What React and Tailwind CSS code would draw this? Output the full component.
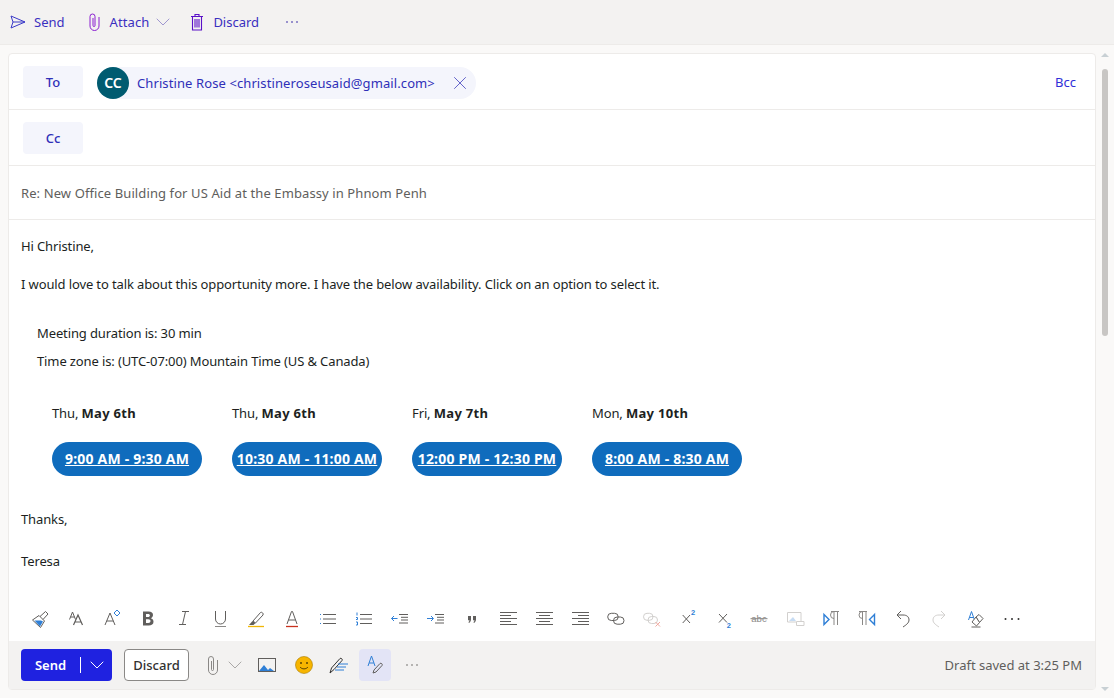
import React from 'react'
import { ChevronDown, X } from 'lucide-react'

const Svg = ({ children }) => (
  <svg width="20" height="20" viewBox="0 0 20 20" fill="none" stroke="#605e5c" strokeWidth="1">{children}</svg>
)

const BLUE = '#2f7fd6'
const DISABLED = '#d2d0ce'

const formatIcons = [
  <Svg key="brush"><path d="M2.5 11L9 6.500l5.500 5.500-4 6.500z" fill="#fff" /><path d="M4.500 11.500h6.500l2 1-3 5z" fill={BLUE} stroke="none" /><path d="M10 7.500L15.500 2.500 18 5l-5 5.500" /></Svg>,
  <Svg key="size"><path d="M3.500 10.500L6.500 3l3 7.500M4.500 8h4" /><path d="M7.500 16L12 6l4.500 10M9 13h6" strokeWidth="1.200" /></Svg>,
  <Svg key="grow"><path d="M3 16L8 4l5 12M4.700 12h6.600" /><path d="M15 1l3 3-3 3-3-3z" stroke={BLUE} /></Svg>,
  <Svg key="bold"><path fillRule="evenodd" d="M5 2.500h5.500c3 0 4.500 1.500 4.500 3.500 0 1.500-1 2.700-2.200 3.200 1.700.4 2.700 1.800 2.700 3.500 0 2.500-2 3.800-4.800 3.800H5zM8 5v3h2c1.200 0 1.900-.6 1.900-1.500 0-1-.7-1.500-1.900-1.500zM8 10.200V14h2.300c1.400 0 2.200-.7 2.200-1.900s-.8-1.900-2.200-1.900z" fill="#605e5c" stroke="none" /></Svg>,
  <Svg key="italic"><path d="M8 2.500h7M5 15.500h7M11.500 2.500L8.500 15.500" /></Svg>,
  <Svg key="underline"><path d="M5.500 2v8a5 5 0 0 0 10 0V2" /><path d="M5 17.500h11" stroke="#8a8886" /></Svg>,
  <Svg key="highlight"><path d="M7 12L14.500 3.500c1-1 3.500 1 2.500 2.500L9.500 14z" /><path d="M3 16l3.500-4 3 2-2 2z" fill="#605e5c" stroke="none" /><path d="M2 17.500h16" stroke="#f2b705" strokeWidth="1.300" /></Svg>,
  <Svg key="color"><path d="M5 15L9.500 2.500h1L15 15M6.500 11h7" /><path d="M4 17.500h12" stroke="#c8321e" strokeWidth="1.300" /></Svg>,
  <Svg key="bullets"><path d="M5 5.500h13M5 10h13M5 14.500h13" /><path d="M2 5.500h1M2 10h1M2 14.500h1" stroke={BLUE} /></Svg>,
  <Svg key="numbers"><path d="M6 5.500h12M6 10h12M6 14.500h12" /><path d="M3 3.500v3M2 8.500h1.500v2H2M2 13h1.500v3H2" stroke={BLUE} /></Svg>,
  <Svg key="outdent"><path d="M9 5.500h9M11 8.300h7M11 11h7M9 14h9" /><path d="M7.500 9.500H1.500M4 7L1.500 9.500 4 12" stroke={BLUE} /></Svg>,
  <Svg key="indent"><path d="M9 5.500h9M11 8.300h7M11 11h7M9 14h9" /><path d="M1 9.500h6M5 7l2.500 2.500L5 12" stroke={BLUE} /></Svg>,
  <Svg key="quote"><path d="M6 7h3v3.500c0 1.500-.8 2.800-1.900 3.500l-.7-.8c.6-.5.9-1 1-2H6zM11 7h3v3.500c0 1.500-.8 2.800-1.900 3.500l-.7-.8c.6-.5.9-1 1-2H11z" fill="#605e5c" stroke="none" /></Svg>,
  <Svg key="left"><path d="M2 3.500h17M2 6.500h11M2 9.500h17M2 12.500h11M2 15.500h17" /></Svg>,
  <Svg key="center"><path d="M2 3.500h17M5 6.500h11M2 9.500h17M5 12.500h11M2 15.500h17" /></Svg>,
  <Svg key="right"><path d="M2 3.500h17M8 6.500h11M2 9.500h17M8 12.500h11M2 15.500h17" /></Svg>,
  <Svg key="link"><rect x="1.700" y="4.300" width="10.500" height="7.200" rx="3.600" /><rect x="7.500" y="8" width="10.500" height="7.200" rx="3.600" /></Svg>,
  <Svg key="unlink"><g stroke={DISABLED}><rect x="1.500" y="4.300" width="9.500" height="7" rx="3.500" /><rect x="6" y="7.500" width="9.500" height="7" rx="3.500" /></g><path d="M13.500 13l4.500 4.500M18 13l-4.500 4.500" stroke="#f0a9a0" /></Svg>,
  <Svg key="sup"><path d="M4.700 6l7.300 8M12 6l-7.300 8" /><text x="13" y="6" fontSize="7.500" fontWeight="700" fill={BLUE} stroke="none" fontFamily="Liberation Sans">2</text></Svg>,
  <Svg key="sub"><path d="M5 5l8 8.500M13 5l-8 8.500" /><text x="12.800" y="19" fontSize="7.500" fontWeight="700" fill={BLUE} stroke="none" fontFamily="Liberation Sans">2</text></Svg>,
  <Svg key="strike"><text x="9" y="12.500" textAnchor="middle" fontSize="9.500" fill="#8a8886" stroke="none" fontFamily="Liberation Sans">abc</text><path d="M0.500 9.700h17" stroke="#8a8886" /></Svg>,
  <Svg key="image"><g stroke={DISABLED}><path d="M10 13H1.500V3.500H15V12" /><path d="M10.500 12.500H18v4h-7.500z" /></g><path d="M3 12l4-4 3 4z" fill="#c7dcf3" stroke="none" /></Svg>,
  <Svg key="ltr"><path d="M9 2.500h8M12 2.500V16M15.500 2.500V16M12 2.500a3.500 3.500 0 0 0 0 7" stroke="#8a8886" /><path d="M2 5.500L7 10.500l-5 5z" stroke={BLUE} strokeWidth="1.400" /></Svg>,
  <Svg key="rtl"><path d="M1 2.500h8M4.500 2.500V16M8 2.500V16M4.500 2.500a3.500 3.500 0 0 0 0 7" stroke="#8a8886" /><path d="M16.500 5.500L11.500 10.500l5 5z" stroke={BLUE} strokeWidth="1.400" /></Svg>,
  <Svg key="undo"><path d="M7 2L3 6l4 4M3 6h6c4 0 6 2 6 5 0 3-3 5-6 7" /></Svg>,
  <Svg key="redo"><path d="M11 2l4 4-4 4M15 6H9C5 6 3 8 3 11c0 3 3 5 6 7" stroke={DISABLED} /></Svg>,
  <Svg key="clear"><path d="M2.500 11L5.500 2.500 8.500 11M3.500 8.500h4" stroke={BLUE} /><path d="M10 8l3-2.500 4 4-3.500 4z" fill="#fff" /><path d="M10 8l3.500 5.500-3 3.500L6 13z" fill="#fff" /><path d="M5.500 18h9" /></Svg>,
  <Svg key="more"><circle cx="3.500" cy="10" r="1" fill="#323130" stroke="none" /><circle cx="10" cy="10" r="1" fill="#323130" stroke="none" /><circle cx="16.500" cy="10" r="1" fill="#323130" stroke="none" /></Svg>,
]

const slots = [
  { day: 'Thu, ', date: 'May 6th', time: '9:00 AM - 9:30 AM' },
  { day: 'Thu, ', date: 'May 6th', time: '10:30 AM - 11:00 AM' },
  { day: 'Fri, ', date: 'May 7th', time: '12:00 PM - 12:30 PM' },
  { day: 'Mon, ', date: 'May 10th', time: '8:00 AM - 8:30 AM' },
]

const Header = () => (
  <div className="h-[45px] shrink-0 bg-[#f3f2f1] border-b border-[#edebe9] flex items-center pl-[10px] text-[13px] text-[#3a2fc0]">
    <svg width="16" height="16" viewBox="0 0 16 16" fill="none" stroke="#3a3ac8" strokeWidth="1"><path d="M1 2l14 6-14 6 2-6zM3 8h12" /></svg>
    <span className="ml-2">Send</span>
    <svg className="ml-[22px]" width="14" height="18" viewBox="0 0 14 18" fill="none" stroke="#8a1fd0" strokeWidth="1"><path d="M12 4v9a4.500 4.500 0 0 1-9 0V3.500a2.500 2.500 0 0 1 5 0v9a1 1 0 0 1-2 0V5" /></svg>
    <span className="ml-[9px] tracking-[0.1px]">Attach</span>
    <ChevronDown className="ml-[2px]" size={24} strokeWidth={0.7} color="#7a70c0" />
    <svg className="ml-[14px]" width="16" height="18" viewBox="0 0 16 18" fill="none" stroke="#5a10c8" strokeWidth="1.100"><path d="M2 3.500h12M3.500 3.500v13.500h9V3.500M6 3.500V1.500h4v2M6 6v8.500M8 6v8.500M10 6v8.500" /></svg>
    <span className="ml-[8px]">Discard</span>
    <span className="ml-[27px] w-3 flex items-center justify-between">
      <i className="w-[2px] h-[2px] rounded-full bg-[#7a70c0]" />
      <i className="w-[2px] h-[2px] rounded-full bg-[#7a70c0]" />
      <i className="w-[2px] h-[2px] rounded-full bg-[#7a70c0]" />
    </span>
  </div>
)

const RecipientLabel = ({ children }) => (
  <div className="w-[60px] h-8 rounded-sm bg-[#f4f5fc] flex items-center justify-center font-medium text-[#2f2fb8]">{children}</div>
)

const Footer = () => (
  <div className="h-[48px] shrink-0 bg-[#f3f2f1] flex items-center pl-3 pr-[13px]">
    <button className="w-[91px] h-8 rounded-sm bg-[#1f22e0] text-white font-semibold flex items-center">
      <span className="w-[59px] text-center">Send</span>
      <span className="w-px h-4 bg-white" />
      <span className="flex-1 flex justify-center"><ChevronDown size={24} strokeWidth={1} /></span>
    </button>
    <button className="ml-3 w-[65px] h-8 rounded-sm border border-[#8a8886] bg-white font-medium text-[#323130]">Discard</button>
    <svg className="ml-4" width="16" height="20" viewBox="0 0 16 20" fill="none" stroke="#8a8886" strokeWidth="1"><path d="M12.500 5v10a4.500 4.500 0 0 1-9 0V4a2.500 2.500 0 0 1 5 0v10.500a1 1 0 0 1-2 0V6" /></svg>
    <ChevronDown className="ml-[2px]" size={24} strokeWidth={0.7} color="#8a8886" />
    <svg className="ml-[11px]" width="18" height="14" viewBox="0 0 18 14" fill="none" stroke="#605e5c"><rect x="0.500" y="0.500" width="17" height="13" /><path d="M1 13l5-6 4 5 2-2 4 3z" fill={BLUE} stroke="none" /></svg>
    <svg className="ml-[18px]" width="20" height="20" viewBox="0 0 20 20"><circle cx="10" cy="10" r="8.500" fill="#f7b500" stroke="#a87b00" strokeWidth="0.6" /><circle cx="7" cy="8" r="1" fill="#5c4400" /><circle cx="13" cy="8" r="1" fill="#5c4400" /><path d="M6 12c2 2.500 6 2.500 8 0" fill="none" stroke="#5c4400" /></svg>
    <svg className="ml-[15px]" width="20" height="20" viewBox="0 0 20 20" fill="none" stroke="#323130"><path d="M1 18l1.500-5L11 3.500c1-1 3 1 2 2l-8 9z" /><path d="M9 9h10M8 12h9M6 15h9" stroke={BLUE} /></svg>
    <div className="ml-[10px] w-8 h-8 rounded-sm bg-[#e3e4f6] flex items-center justify-center">
      <svg width="20" height="20" viewBox="0 0 20 20" fill="none"><path d="M3 11L6.500 1 10 11M4.200 8h4.600" stroke={BLUE} /><path d="M8 18l1-3 6-6.500c1-1 3 .8 2 2L11 17z" stroke="#605e5c" /></svg>
    </div>
    <span className="ml-[15px] w-3 flex items-center justify-between">
      <i className="w-[2px] h-[2px] rounded-full bg-[#a19f9d]" />
      <i className="w-[2px] h-[2px] rounded-full bg-[#a19f9d]" />
      <i className="w-[2px] h-[2px] rounded-full bg-[#a19f9d]" />
    </span>
    <span className="ml-auto text-[#605e5c]">Draft saved at 3:25 PM</span>
  </div>
)

const App = () => {
  return (
    <div className="h-[698px] w-[1114px] overflow-hidden flex flex-col bg-[#faf9f8] text-[13px] leading-5 text-[#201f1e] font-['Noto_Sans',sans-serif]">
      <Header />
      <div className="flex-1 flex min-h-0">
        <div className="ml-2 mt-2 mb-2 w-[1088px] bg-white border border-[#edebe9] rounded-sm flex flex-col">
          <div className="h-[56px] shrink-0 border-b border-[#edebe9] flex items-center pl-[14px] pr-[19px]">
            <RecipientLabel>To</RecipientLabel>
            <div className="ml-[14px] mt-[2px] h-8 rounded-full bg-[#f4f5fc] flex items-center text-[#2f2fb8]">
              <div className="w-8 h-8 rounded-full bg-[#005b70] text-white font-semibold text-sm flex items-center justify-center">CC</div>
              <span className="ml-2 tracking-[0.1px]">Christine Rose &lt;christineroseusaid@gmail.com&gt;</span>
              <X className="ml-[14px] mr-[5px]" size={22} strokeWidth={0.8} color="#2f2fb8" />
            </div>
            <span className="ml-auto text-[#2f2fd8]">Bcc</span>
          </div>
          <div className="h-[56px] shrink-0 border-b border-[#edebe9] flex items-center pl-[14px]">
            <RecipientLabel>Cc</RecipientLabel>
          </div>
          <div className="h-[54px] shrink-0 border-b border-[#edebe9] flex items-center pl-3 text-[#605e5c] tracking-[0.1px]">
            Re: New Office Building for US Aid at the Embassy in Phnom Penh
          </div>
          <div className="flex-1 pl-3 pt-4 tracking-[-0.12px]">
            <p>Hi Christine,</p>
            <p className="mt-[18px]">I would love to talk about this opportunity more. I have the below availability. Click on an option to select it.</p>
            <div className="pl-4">
              <p className="mt-[29px]">Meeting duration is: 30 min</p>
              <p className="mt-2">Time zone is: (UTC-07:00) Mountain Time (US &amp; Canada)</p>
              <div className="mt-8 pl-[15px] flex gap-[30px]">
                {slots.map((slot) => (
                  <div key={slot.time} className="w-[150px]">
                    <p>{slot.day}<b className="font-bold tracking-[0.3px]">{slot.date}</b></p>
                    <a className="mt-[19px] h-[34px] rounded-full bg-[#0f6cbd] text-white text-sm font-bold tracking-[0.2px] underline flex items-center justify-center">{slot.time}</a>
                  </div>
                ))}
              </div>
            </div>
            <p className="mt-[33px]">Thanks,</p>
            <p className="mt-[22px]">Teresa</p>
          </div>
          <div className="h-[44px] shrink-0 flex items-center pl-[13px] pb-[1px]">
            {formatIcons.map((icon) => (
              <div key={icon.key} className="w-9 h-9 shrink-0 flex items-center justify-center">{icon}</div>
            ))}
          </div>
          <Footer />
        </div>
        <div className="ml-[4px] w-[10px] flex flex-col items-center pt-2">
          <i className="w-0 h-0 border-x-[4px] border-x-transparent border-b-[4px] border-b-[#c8d0d4]" />
          <div className="mt-3 w-[6px] h-[267px] rounded-full bg-[#c8c6c4]" />
          <div className="flex-1" />
          <i className="mb-[7px] w-0 h-0 border-x-[4px] border-x-transparent border-t-[4px] border-t-[#c8d0d4]" />
        </div>
      </div>
    </div>
  )
}

export default App
